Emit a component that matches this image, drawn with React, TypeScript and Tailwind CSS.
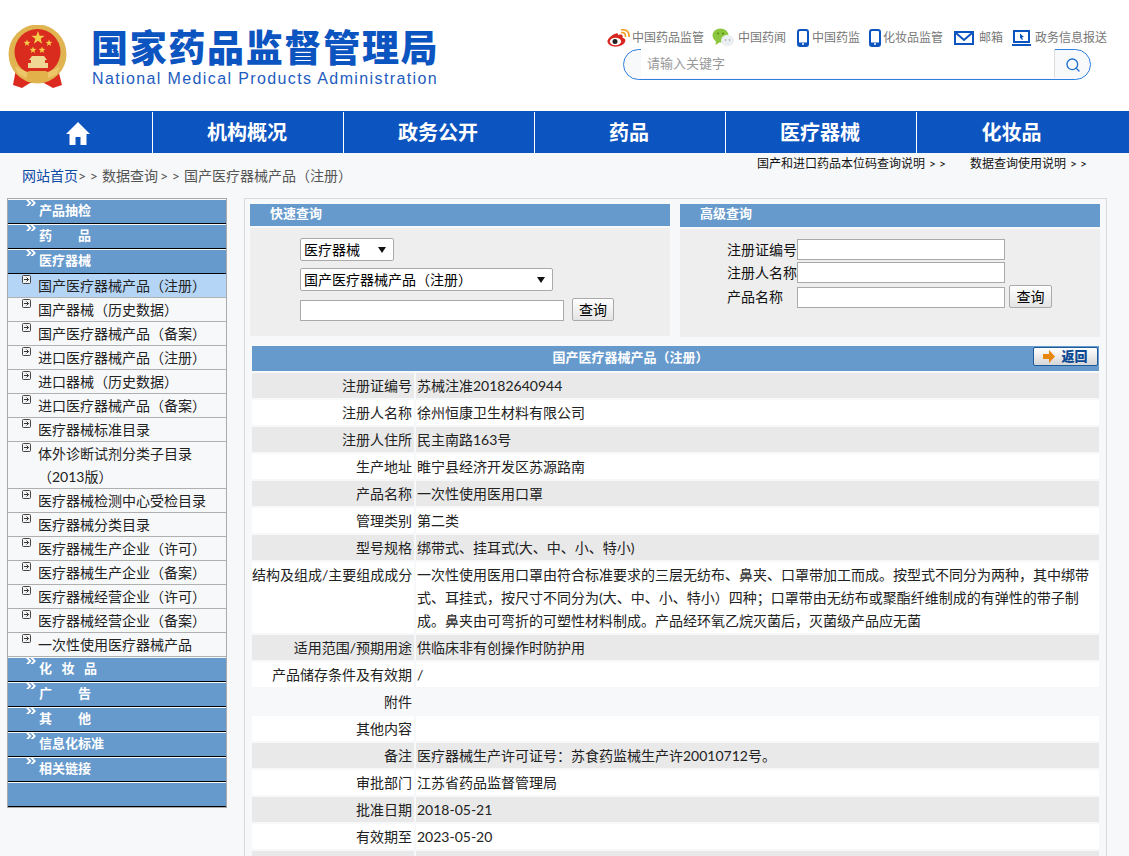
import { Search } from 'lucide-react';

const font = "font-['Lato','Noto_Sans_CJK_SC','Noto_Sans',sans-serif]";

function star(cx: number, cy: number, r: number) {
  const pts: string[] = [];
  for (let i = 0; i < 10; i++) {
    const a = (Math.PI / 5) * i - Math.PI / 2;
    const d = i % 2 === 0 ? r : r * 0.4;
    pts.push(`${(cx + d * Math.cos(a)).toFixed(2)},${(cy + d * Math.sin(a)).toFixed(2)}`);
  }
  return pts.join(' ');
}

function Emblem() {
  return (
    <svg width="60" height="64" viewBox="0 0 60 64">
      <path d="M8 44 L5 60 L14 63 L22 58 L36 58 L45 63 L54 60 L50 44 Z" fill="#dd2a1f" />
      <ellipse cx="29.500" cy="29" rx="29" ry="29.500" fill="#e0b450" />
      <ellipse cx="29.500" cy="27" rx="23" ry="23" fill="#d92b1e" />
      <polygon points={star(30, 13, 7)} fill="#f6cf4a" />
      <polygon points={star(19, 18, 3.600)} fill="#f6cf4a" />
      <polygon points={star(41, 18, 3.600)} fill="#f6cf4a" />
      <polygon points={star(25, 25, 3.600)} fill="#f6cf4a" />
      <polygon points={star(34, 25, 3.600)} fill="#f6cf4a" />
      <path d="M24 31 H36 L39 35 H37 V38 H40 V43 H20 V38 H23 V35 H21 Z" fill="#efd694" />
      <path d="M7 41 Q30 56 52 41 L49 49 Q30 60 10 49 Z" fill="#ecc668" />
      <rect x="19" y="46" width="21" height="10" rx="3" fill="#e2b14a" />
    </svg>
  );
}

function WeiboIcon() {
  return (
    <svg width="23" height="18" viewBox="0 0 23 18">
      <path d="M9 4.500 C3.500 6.500 0 10.500 .5 13 C1.300 16.500 6 18 10 17.600 C15 17 18.800 14 18.300 11 C18 9.500 16.500 9 15.500 8.700 C16.300 6.800 15.500 5.500 13.500 5.500 C12.500 5.500 11.500 6 11 6.300 C11.300 4.500 10.500 3.800 9 4.500 Z" fill="#d8261f" />
      <ellipse cx="8.500" cy="12.500" rx="5.600" ry="3.800" fill="#fff" />
      <circle cx="8" cy="12.500" r="2.500" fill="#222" />
      <path d="M14 3.500 Q19 3 18.500 8" stroke="#f39a1f" strokeWidth="1.600" fill="none" />
      <path d="M14 .8 Q22.500 0 22 8" stroke="#f39a1f" strokeWidth="1.600" fill="none" />
    </svg>
  );
}

function WechatIcon() {
  return (
    <svg width="22" height="20" viewBox="0 0 22 20">
      <ellipse cx="8.500" cy="7.500" rx="8" ry="7" fill="#8cc63f" />
      <path d="M4 12 L3.500 17 L8 14 Z" fill="#8cc63f" />
      <circle cx="6" cy="5.500" r="1" fill="#4f8a10" />
      <circle cx="11" cy="5.500" r="1" fill="#4f8a10" />
      <ellipse cx="15.500" cy="12.500" rx="6.500" ry="5.800" fill="#eceff1" />
      <circle cx="13.500" cy="12" r=".8" fill="#9aa0a6" />
      <circle cx="17.500" cy="12" r=".8" fill="#9aa0a6" />
    </svg>
  );
}

function PhoneIcon() {
  return (
    <svg width="12" height="18" viewBox="0 0 12 18">
      <rect x="1" y="1" width="10" height="16" rx="2" fill="#fff" stroke="#0c54c0" strokeWidth="2" />
      <rect x="1" y="13.500" width="10" height="3.500" fill="#0c54c0" />
      <circle cx="6" cy="15" r="1" fill="#fff" />
    </svg>
  );
}

function MailIcon() {
  return (
    <svg width="20" height="14" viewBox="0 0 20 14">
      <rect x="1" y="1" width="18" height="12" fill="#fff" stroke="#0c54c0" strokeWidth="2" />
      <path d="M2 2 L10 9 L18 2" fill="none" stroke="#0c54c0" strokeWidth="2" />
    </svg>
  );
}

function LaptopIcon() {
  return (
    <svg width="19" height="17" viewBox="0 0 19 17">
      <rect x="2" y="1" width="15" height="11" fill="#fff" stroke="#0c54c0" strokeWidth="2" />
      <rect x="0" y="14" width="19" height="2" fill="#0c54c0" />
      <path d="M8 3.500 L12 7 L10 7.300 L11 9.500 L9.800 10 L8.800 7.800 L8 9 Z" fill="#0c54c0" />
    </svg>
  );
}

function HomeIcon() {
  return (
    <svg width="24" height="24" viewBox="0 0 24 24" fill="#fff">
      <path d="M12 1 L24 13 H20.500 V24 H14.500 V16 H9.500 V24 H3.500 V13 H0 Z" />
    </svg>
  );
}

function ItemIcon() {
  return (
    <svg width="9" height="9" viewBox="0 0 9 9" className="absolute left-[14px] top-[1px]">
      <rect x=".5" y=".5" width="8" height="8" rx="1" fill="#f2f2f2" stroke="#444" />
      <path d="M2 4.500 H6.500 M4.500 2.500 L6.500 4.500 L4.500 6.500" stroke="#333" fill="none" />
    </svg>
  );
}

function SideHead({ text, noGap }: { text: string; noGap?: boolean }) {
  return (
    <div className={`relative h-[24px] border-b border-black bg-[#6699cc] pl-[31px] text-[13px] leading-[21px] font-bold text-white whitespace-pre ${noGap ? '' : 'mb-px'}`}>
      {text && (
        <svg width="10" height="6" viewBox="0 0 10 6" className="absolute left-[18px] top-0">
          <path d="M0 0 L3 3 L0 6 H2.500 L5.500 3 L2.500 0 Z M4.500 0 L7.500 3 L4.500 6 H7 L10 3 L7 0 Z" fill="#fff" />
        </svg>
      )}
      {text}
    </div>
  );
}

function SideItem({ text, active }: { text: string; active?: boolean }) {
  return (
    <div className={`relative border-b border-[#b0b0b0] pl-[30px] pr-[20px] text-[14px] leading-[23px] text-[#222] ${active ? 'bg-[#b5d5f7]' : ''}`}>
      <ItemIcon />
      {text}
    </div>
  );
}

const sideTop = ['产品抽检', '药　　品', '医疗器械'];
const sideItems = [
  '国产医疗器械产品（注册）',
  '国产器械（历史数据）',
  '国产医疗器械产品（备案）',
  '进口医疗器械产品（注册）',
  '进口器械（历史数据）',
  '进口医疗器械产品（备案）',
  '医疗器械标准目录',
  '体外诊断试剂分类子目录（2013版）',
  '医疗器械检测中心受检目录',
  '医疗器械分类目录',
  '医疗器械生产企业（许可）',
  '医疗器械生产企业（备案）',
  '医疗器械经营企业（许可）',
  '医疗器械经营企业（备案）',
  '一次性使用医疗器械产品',
];
const sideBottom = ['化   妆   品', '广　　告', '其　　他', '信息化标准', '相关链接', ''];

const rows: [string, string, string][] = [
  ['注册证编号', '苏械注准20182640944', 'bg-[#e9e9e9]'],
  ['注册人名称', '徐州恒康卫生材料有限公司', 'bg-white'],
  ['注册人住所', '民主南路163号', 'bg-[#e9e9e9]'],
  ['生产地址', '睢宁县经济开发区苏源路南', 'bg-white'],
  ['产品名称', '一次性使用医用口罩', 'bg-[#e9e9e9]'],
  ['管理类别', '第二类', 'bg-white'],
  ['型号规格', '绑带式、挂耳式(大、中、小、特小)', 'bg-[#e9e9e9]'],
  [
    '结构及组成/主要组成成分',
    '一次性使用医用口罩由符合标准要求的三层无纺布、鼻夹、口罩带加工而成。按型式不同分为两种，其中绑带式、耳挂式，按尺寸不同分为(大、中、小、特小）四种；口罩带由无纺布或聚酯纤维制成的有弹性的带子制成。鼻夹由可弯折的可塑性材料制成。产品经环氧乙烷灭菌后，灭菌级产品应无菌',
    'bg-white',
  ],
  ['适用范围/预期用途', '供临床非有创操作时防护用', 'bg-[#e9e9e9]'],
  ['产品储存条件及有效期', '/', 'bg-white'],
  ['附件', '', ''],
  ['其他内容', '', 'bg-white'],
  ['备注', '医疗器械生产许可证号：苏食药监械生产许20010712号。', 'bg-[#e9e9e9]'],
  ['审批部门', '江苏省药品监督管理局', 'bg-white'],
  ['批准日期', '2018-05-21', 'bg-[#e9e9e9]'],
  ['有效期至', '2023-05-20', 'bg-white'],
  ['', '', 'bg-[#e9e9e9]'],
];

function QueryBtn({ width = 'w-[42px]' }: { width?: string }) {
  return (
    <button className={`h-[23px] rounded-[2px] border border-[#aaa] bg-gradient-to-b from-white to-[#e4e4e4] text-[14px] leading-[20px] text-black ${width}`}>
      查询
    </button>
  );
}

function FakeSelect({ width, text }: { width: string; text: string }) {
  return (
    <div className={`flex h-[23px] items-center justify-between rounded-[2px] border border-[#aaa] bg-white pl-[3px] pr-[7px] text-[14px] text-black ${width}`}>
      <span>{text}</span>
      <svg width="8" height="6" viewBox="0 0 8 6"><path d="M0 0 H8 L4 6 Z" fill="#111" /></svg>
    </div>
  );
}

function TextBox({ width }: { width: string }) {
  return <input className={`block h-[21px] border border-[#aaa] bg-white outline-none ${width}`} />;
}

function TopLink({ icon, text, gap, ml }: { icon: React.ReactNode; text: string; gap: string; ml: string }) {
  return (
    <div className={`flex items-center whitespace-nowrap ${gap} ${ml}`}>
      {icon}
      <span className="text-[12px] leading-[20px] text-[#777]">{text}</span>
    </div>
  );
}

export default function App() {
  return (
    <div className={`h-[856px] w-[1129px] overflow-hidden bg-[#f7f8fa] ${font}`}>
      {/* header */}
      <div className="flex h-[111px] bg-white">
        <div className="ml-[8px] mt-[25px] w-[60px]"><Emblem /></div>
        <div className="ml-[23px] mt-[26px] w-[350px]">
          <div className="text-[37px] leading-[44px] font-black tracking-[1.700px] whitespace-nowrap text-[#0c54c0]">国家药品监督管理局</div>
          <div className="mt-[-1px] pl-px font-['Liberation_Sans',sans-serif] text-[16px] leading-[20px] tracking-[1.380px] whitespace-nowrap text-[#1e5cc0]">National Medical Products Administration</div>
        </div>
        <div className="ml-[166px] w-[500px] pt-[28px]">
          <div className="flex h-[20px] items-center">
            <TopLink icon={<WeiboIcon />} text="中国药品监管" gap="gap-[2px]" ml="" />
            <TopLink icon={<WechatIcon />} text="中国药闻" gap="gap-[4px]" ml="ml-[8px]" />
            <TopLink icon={<PhoneIcon />} text="中国药监" gap="gap-[3px]" ml="ml-[11px]" />
            <TopLink icon={<PhoneIcon />} text="化妆品监管" gap="gap-[2px]" ml="ml-[9px]" />
            <TopLink icon={<MailIcon />} text="邮箱" gap="gap-[5px]" ml="ml-[11px]" />
            <TopLink icon={<LaptopIcon />} text="政务信息报送" gap="gap-[4px]" ml="ml-[9px]" />
          </div>
          <div className="ml-[16px] mt-[1px] flex h-[31px] w-[468px] items-center rounded-full border border-[#2f7fe0] bg-[#f8f9fb]">
            <div className="ml-[17px] mt-[-2px] flex h-[29px] w-[414px] items-center border-r border-r-[#ddd] bg-white pl-[6px] pt-px text-[13px] text-[#999]">请输入关键字</div>
            <Search size={16} strokeWidth={2} className="ml-[10px] text-[#1e6fd0]" />
          </div>
        </div>
      </div>

      {/* nav */}
      <div className="flex h-[42px] bg-[#0c54c0] pt-px text-[20px] font-bold leading-[41px] text-white">
        <div className="flex w-[153px] items-center justify-center border-r border-white pl-[4px]"><HomeIcon /></div>
        {['机构概况', '政务公开', '药品', '医疗器械'].map((t) => (
          <div key={t} className="w-[191px] border-r border-white pr-[2px] text-center">{t}</div>
        ))}
        <div className="w-[191px] pr-[2px] text-center">化妆品</div>
      </div>

      {/* breadcrumb row */}
      <div className="relative h-[45px]">
        <div className="absolute left-[22px] top-[13px] flex text-[14px] leading-[20px] text-[#555] whitespace-pre">
          <span className="text-[#0c4aa6]">网站首页</span>
          <span className="w-[24px]">&gt; &gt;</span>
          <span>数据查询</span>
          <span className="ml-[2px] w-[24px]">&gt; &gt;</span>
          <span>国产医疗器械产品（注册）</span>
        </div>
        <div className="absolute left-[757px] top-[2px] flex gap-[4px] text-[12px] leading-[18px] text-[#111] whitespace-pre">
          <span>国产和进口药品本位码查询说明</span>
          <span>&gt; &gt;</span>
        </div>
        <div className="absolute left-[970px] top-[2px] flex gap-[4px] text-[12px] leading-[18px] text-[#111] whitespace-pre">
          <span>数据查询使用说明</span>
          <span>&gt; &gt;</span>
        </div>
      </div>

      {/* main */}
      <div className="flex items-start">
        {/* sidebar */}
        <div className="ml-[7px] w-[220px] border border-[#aaa] pt-px">
          {sideTop.map((t, i) => <SideHead key={t} text={t} noGap={i === 2} />)}
          {sideItems.map((t, i) => <SideItem key={t} text={t} active={i === 0} />)}
          <div className="mt-px">
            {sideBottom.map((t, i) => <SideHead key={t} text={t} noGap={i === 5} />)}
          </div>
        </div>

        {/* content */}
        <div className="ml-[17px] h-[700px] w-[863px] border border-[#d8dade] pl-[5px] pt-[5px]">
          <div className="flex gap-[10px]">
            <div className="w-[420px]">
              <div className="h-[22px] bg-[#6699cc] pl-[20px] text-[13px] font-bold leading-[19px] text-white">快速查询</div>
              <div className="mt-[2px] h-[108px] bg-[#eeeeee] pl-[50px] pt-[10px]">
                <FakeSelect width="w-[94px]" text="医疗器械" />
                <div className="mt-[7px]"><FakeSelect width="w-[253px]" text="国产医疗器械产品（注册）" /></div>
                <div className="mt-[7px] flex items-end gap-[8px]">
                  <TextBox width="w-[264px]" />
                  <QueryBtn />
                </div>
              </div>
            </div>
            <div className="w-[420px]">
              <div className="h-[23px] bg-[#6699cc] pl-[20px] text-[13px] font-bold leading-[19px] text-white">高级查询</div>
              <div className="mt-[2px] h-[108px] bg-[#eeeeee] pl-[47px] pt-[10px] text-[14px] leading-[21px] text-[#111]">
                <div className="flex"><span className="w-[70px]">注册证编号</span><TextBox width="w-[208px]" /></div>
                <div className="mt-[2px] flex"><span className="w-[70px]">注册人名称</span><TextBox width="w-[208px]" /></div>
                <div className="mt-[2px] flex items-end">
                  <span className="w-[70px] pb-[1px]">产品名称</span>
                  <TextBox width="w-[208px]" />
                  <div className="ml-[4px]"><QueryBtn width="w-[43px]" /></div>
                </div>
              </div>
            </div>
          </div>

          <div className="ml-[2px] mt-[9px] w-[847px]">
            <div className="relative h-[25px] bg-[#6699cc] pr-[90px] text-center text-[13px] font-bold leading-[23px] text-white">
              国产医疗器械产品（注册）
              <button className="absolute right-[1px] top-[1px] flex h-[19px] w-[65px] items-center justify-center gap-[6px] rounded-[2px] border border-[#1d5a9c] bg-gradient-to-b from-white to-[#d6d6d6] text-[13px] font-black leading-[17px] text-[#0d4a94]">
                <svg width="12" height="13" viewBox="0 0 12 13"><path d="M0 4 H6 V0 L12 6.500 L6 13 V9 H0 Z" fill="#e8860c" /></svg>
                返回
              </button>
            </div>
            <div className="mt-[2px] grid grid-cols-[162px_683px] gap-[2px] text-[14px] leading-[23px] text-[#222]">
              {rows.map(([label, value, bg], i) => (
                <div key={i} className="contents">
                  <div className={`${i === 7 ? 'min-h-[71px]' : 'min-h-[25px]'} text-right pr-[2px] pt-[1px] whitespace-nowrap ${bg}`}>{label}</div>
                  <div className={`${i === 7 ? 'min-h-[71px]' : 'min-h-[25px]'} pt-[1px] pl-[1px] ${bg}`}>{value}</div>
                </div>
              ))}
            </div>
          </div>
        </div>
      </div>
    </div>
  );
}
